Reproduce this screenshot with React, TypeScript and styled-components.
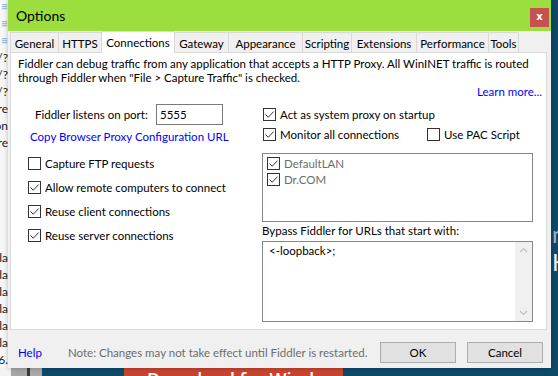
import React from "react";
import styled, { createGlobalStyle } from "styled-components";

const GlobalStyle = createGlobalStyle`
  html, body {
    margin: 0;
    padding: 0;
    background: #0c4a68;
  }
  body {
    font-family: Lato, "Noto Sans", sans-serif;
    font-size: 11.5px;
    color: #000;
  }
  * {
    box-sizing: border-box;
  }
`;

const LINK = "#0000ff";

const Desktop = styled.div`
  width: 558px;
  height: 376px;
  overflow: hidden;
  display: grid;
  grid-template-columns: 8px 543px 7px;
  grid-template-rows: 368px 8px;
  background: #0c4a68;
`;

const BackWindow = styled.div`
  grid-column: 1;
  grid-row: 1;
  background: #f7f7f7;
  overflow: hidden;
  display: flex;
  flex-direction: column;
  margin-top: -2px;
`;

const BackLine = styled.div<{ $faded?: boolean }>`
  height: 17px;
  line-height: 17px;
  display: flex;
  justify-content: flex-end;
  white-space: nowrap;
  font-size: 12px;
  color: ${(p) => (p.$faded ? "#8fb8e0" : "#222")};
`;

const RightStrip = styled.div`
  grid-column: 3;
  grid-row: 1;
  background: #0c4a68;
  overflow: hidden;
  padding-top: 220px;
`;

const BigFragment = styled.div<{ $color: string }>`
  font-size: 24px;
  line-height: 28px;
  color: ${(p) => p.$color};
  white-space: nowrap;
  margin-left: 1px;
`;

const BottomStrip = styled.div`
  grid-column: 1 / -1;
  grid-row: 2;
  display: flex;
  overflow: hidden;
`;

const Segment = styled.div<{ $w: number; $bg: string }>`
  flex: 0 0 ${(p) => p.$w}px;
  background: ${(p) => p.$bg};
  overflow: hidden;
`;

const BannerText = styled.div`
  color: #fff;
  font-family: "Open Sans", sans-serif;
  font-size: 18px;
  font-weight: 600;
  line-height: 20px;
  margin: 1px 0 0 23px;
  white-space: nowrap;
`;

const Window = styled.div`
  grid-column: 2;
  grid-row: 1;
  display: flex;
  flex-direction: column;
  background: #f0f0f0;
  box-shadow: 0 0 5px rgba(0, 0, 0, 0.25);
`;

const TitleBar = styled.div`
  height: 31px;
  flex: 0 0 31px;
  background: #9bde3e;
  display: flex;
  align-items: flex-start;
  padding-left: 8px;
`;

const Title = styled.div`
  font-size: 14px;
  line-height: 31px;
`;

const CloseButton = styled.div`
  margin: 8px 2px 0 auto;
  width: 19px;
  height: 19px;
  background: #c75050;
  color: #fff;
  font-family: "DejaVu Sans", sans-serif;
  font-weight: bold;
  font-size: 10px;
  line-height: 18px;
  text-align: center;
`;

const TabStrip = styled.div`
  display: flex;
  align-items: flex-end;
  height: 21px;
  flex: 0 0 21px;
  margin: 0 4px 0 2px;
`;

const Tab = styled.div<{ $w: number; $active?: boolean }>`
  position: relative;
  z-index: ${(p) => (p.$active ? 1 : 0)};
  width: ${(p) => p.$w}px;
  height: ${(p) => (p.$active ? 22 : 20)}px;
  margin-right: -1px;
  margin-bottom: ${(p) => (p.$active ? -1 : 0)}px;
  border: 1px solid #d9d9d9;
  border-bottom: none;
  background: ${(p) => (p.$active ? "#fff" : "#f0f0f0")};
  display: flex;
  align-items: center;
  justify-content: center;
  padding-top: ${(p) => (p.$active ? 0 : 1)}px;
  white-space: nowrap;
`;

const Panel = styled.div`
  height: 278px;
  flex: 0 0 278px;
  margin: 0 4px 0 2px;
  background: #fff;
  border: 1px solid #d9d9d9;
  padding: 4px 4px 0 7px;
  display: flex;
  flex-direction: column;
`;

const Description = styled.div`
  line-height: 14px;
  white-space: nowrap;
`;

const LearnMore = styled.div`
  line-height: 14px;
  text-align: right;
  color: ${LINK};
`;

const Columns = styled.div`
  margin-top: 5px;
  display: grid;
  grid-template-columns: 244px 271px;
`;

const Column = styled.div`
  display: flex;
  flex-direction: column;
`;

const PortRow = styled.div`
  height: 21px;
  display: flex;
  align-items: center;
  padding-left: 17px;
`;

const PortLabel = styled.span`
  width: 121px;
`;

const PortField = styled.div`
  width: 67px;
  height: 21px;
  border: 1px solid #7a7a7a;
  padding-left: 3px;
  line-height: 19px;
`;

const LinkText = styled.div<{ $indent?: number }>`
  color: ${LINK};
  line-height: 14px;
  margin-top: 5px;
  padding-left: ${(p) => p.$indent ?? 0}px;
`;

const CheckList = styled.div`
  margin-top: 7px;
  padding-left: 10px;
  display: flex;
  flex-direction: column;
`;

const CheckRow = styled.div<{ $h: number; $indent?: number }>`
  height: ${(p) => p.$h}px;
  display: flex;
  align-items: center;
  padding-left: ${(p) => p.$indent ?? 0}px;
`;

const CheckItem = styled.label<{ $w?: number; $muted?: boolean }>`
  display: flex;
  align-items: center;
  gap: 4px;
  width: ${(p) => (p.$w ? `${p.$w}px` : "auto")};
  color: ${(p) => (p.$muted ? "#6d6d6d" : "#000")};
  white-space: nowrap;
`;

const Box = styled.span`
  width: 13px;
  height: 13px;
  flex: 0 0 13px;
  border: 1px solid #333;
  background: #fff;
  display: flex;
  align-items: center;
  justify-content: center;
`;

const ListBox = styled.div`
  margin-top: 9px;
  height: 69px;
  border: 1px solid #828790;
  padding: 1px 0 0 4px;
  display: flex;
  flex-direction: column;
`;

const FieldLabel = styled.div`
  margin-top: 2px;
  line-height: 14px;
`;

const TextArea = styled.div`
  margin-top: 3px;
  height: 81px;
  border: 1px solid #828790;
  display: flex;
`;

const TextAreaBody = styled.div`
  flex: 1;
  padding: 2px 0 0 6px;
  line-height: 14px;
`;

const ScrollBar = styled.div`
  width: 17px;
  background: #f0f0f0;
  display: flex;
  flex-direction: column;
  justify-content: space-between;
  align-items: center;
  padding: 5px 0;
`;

const Footer = styled.div`
  flex: 1;
  display: flex;
  align-items: flex-start;
  padding: 12px 8px 0 10px;
`;

const HelpLink = styled.div`
  width: 50px;
  color: ${LINK};
  line-height: 21px;
`;

const Note = styled.div`
  color: #6d6d6d;
  line-height: 21px;
  white-space: nowrap;
`;

const Buttons = styled.div`
  margin-left: auto;
  display: flex;
  gap: 11px;
`;

const Button = styled.button`
  width: 76px;
  height: 21px;
  background: #e1e1e1;
  border: 1px solid #adadad;
  font-family: inherit;
  font-size: 11.5px;
  color: #000;
  padding: 0;
`;

const CheckBox = ({ checked }: { checked?: boolean }) => (
  <Box>
    {checked && (
      <svg width="11" height="11" viewBox="0 0 11 11">
        <path d="M1.5 5.5 L4.2 8.3 L9.6 2.6" fill="none" stroke="#333" strokeWidth="1" />
      </svg>
    )}
  </Box>
);

const Chevron = ({ up }: { up?: boolean }) => (
  <svg width="9" height="6" viewBox="0 0 9 6">
    <path
      d={up ? "M1 5 L4.5 1.5 L8 5" : "M1 1 L4.5 4.5 L8 1"}
      fill="none"
      stroke="#c2c2c2"
      strokeWidth="1.2"
    />
  </svg>
);

const tabs = [
  { name: "General", w: 49 },
  { name: "HTTPS", w: 44 },
  { name: "Connections", w: 74, active: true },
  { name: "Gateway", w: 55 },
  { name: "Appearance", w: 75 },
  { name: "Scripting", w: 50 },
  { name: "Extensions", w: 66 },
  { name: "Performance", w: 73 },
  { name: "Tools", w: 31 },
];

const backLines = [
  { t: "≡", f: true },
  { t: "≡", f: true },
  { t: "≡", f: true },
  { t: "/?" },
  { t: "/?" },
  { t: "/?" },
  { t: "re" },
  { t: "on" },
  { t: "re" },
  { t: "" },
  { t: "" },
  { t: "" },
  { t: "" },
  { t: "" },
  { t: "" },
  { t: "la" },
  { t: "la" },
  { t: "la" },
  { t: "la" },
  { t: "la" },
  { t: "la" },
  { t: "6." },
];

const leftChecks = [
  { label: "Capture FTP requests", checked: false },
  { label: "Allow remote computers to connect", checked: true },
  { label: "Reuse client connections", checked: true },
  { label: "Reuse server connections", checked: true },
];

export default function App() {
  return (
    <>
      <GlobalStyle />
      <Desktop>
        <BackWindow>
          {backLines.map((l, i) => (
            <BackLine key={i} $faded={l.f}>
              {l.t}
            </BackLine>
          ))}
        </BackWindow>

        <RightStrip>
          <BigFragment $color="#9fb3bf">n</BigFragment>
          <BigFragment $color="#e8eef2">K</BigFragment>
        </RightStrip>

        <BottomStrip>
          <Segment $w={11} $bg="#f2f2f2" />
          <Segment $w={16} $bg="#a6a6a6" />
          <Segment $w={3} $bg="#3a3a3a" />
          <Segment $w={12} $bg="#a9a9a9" />
          <Segment $w={82} $bg="#0c4a68" />
          <Segment $w={219} $bg="#c8442e">
            <BannerText>Download for Windows</BannerText>
          </Segment>
          <Segment $w={215} $bg="#0c4a68" />
        </BottomStrip>

        <Window>
          <TitleBar>
            <Title>Options</Title>
            <CloseButton>x</CloseButton>
          </TitleBar>

          <TabStrip>
            {tabs.map((t) => (
              <Tab key={t.name} $w={t.w} $active={t.active}>
                {t.name}
              </Tab>
            ))}
          </TabStrip>

          <Panel>
            <Description>
              Fiddler can debug traffic from any application that accepts a HTTP Proxy. All WinINET traffic is routed
              <br />
              through Fiddler when "File &gt; Capture Traffic" is checked.
            </Description>
            <LearnMore>Learn more...</LearnMore>

            <Columns>
              <Column>
                <PortRow>
                  <PortLabel>Fiddler listens on port:</PortLabel>
                  <PortField>5555</PortField>
                </PortRow>
                <LinkText $indent={12}>Copy Browser Proxy Configuration URL</LinkText>
                <CheckList>
                  {leftChecks.map((c) => (
                    <CheckRow key={c.label} $h={24}>
                      <CheckItem>
                        <CheckBox checked={c.checked} />
                        {c.label}
                      </CheckItem>
                    </CheckRow>
                  ))}
                </CheckList>
              </Column>

              <Column>
                <CheckRow $h={20} $indent={1}>
                  <CheckItem>
                    <CheckBox checked />
                    Act as system proxy on startup
                  </CheckItem>
                </CheckRow>
                <CheckRow $h={20} $indent={1}>
                  <CheckItem $w={164}>
                    <CheckBox checked />
                    Monitor all connections
                  </CheckItem>
                  <CheckItem>
                    <CheckBox />
                    Use PAC Script
                  </CheckItem>
                </CheckRow>
                <ListBox>
                  <CheckRow $h={16}>
                    <CheckItem $muted>
                      <CheckBox checked />
                      DefaultLAN
                    </CheckItem>
                  </CheckRow>
                  <CheckRow $h={16}>
                    <CheckItem $muted>
                      <CheckBox checked />
                      Dr.COM
                    </CheckItem>
                  </CheckRow>
                </ListBox>
                <FieldLabel>Bypass Fiddler for URLs that start with:</FieldLabel>
                <TextArea>
                  <TextAreaBody>&lt;-loopback&gt;;</TextAreaBody>
                  <ScrollBar>
                    <Chevron up />
                    <Chevron />
                  </ScrollBar>
                </TextArea>
              </Column>
            </Columns>
          </Panel>

          <Footer>
            <HelpLink>Help</HelpLink>
            <Note>Note: Changes may not take effect until Fiddler is restarted.</Note>
            <Buttons>
              <Button>OK</Button>
              <Button>Cancel</Button>
            </Buttons>
          </Footer>
        </Window>
      </Desktop>
    </>
  );
}
